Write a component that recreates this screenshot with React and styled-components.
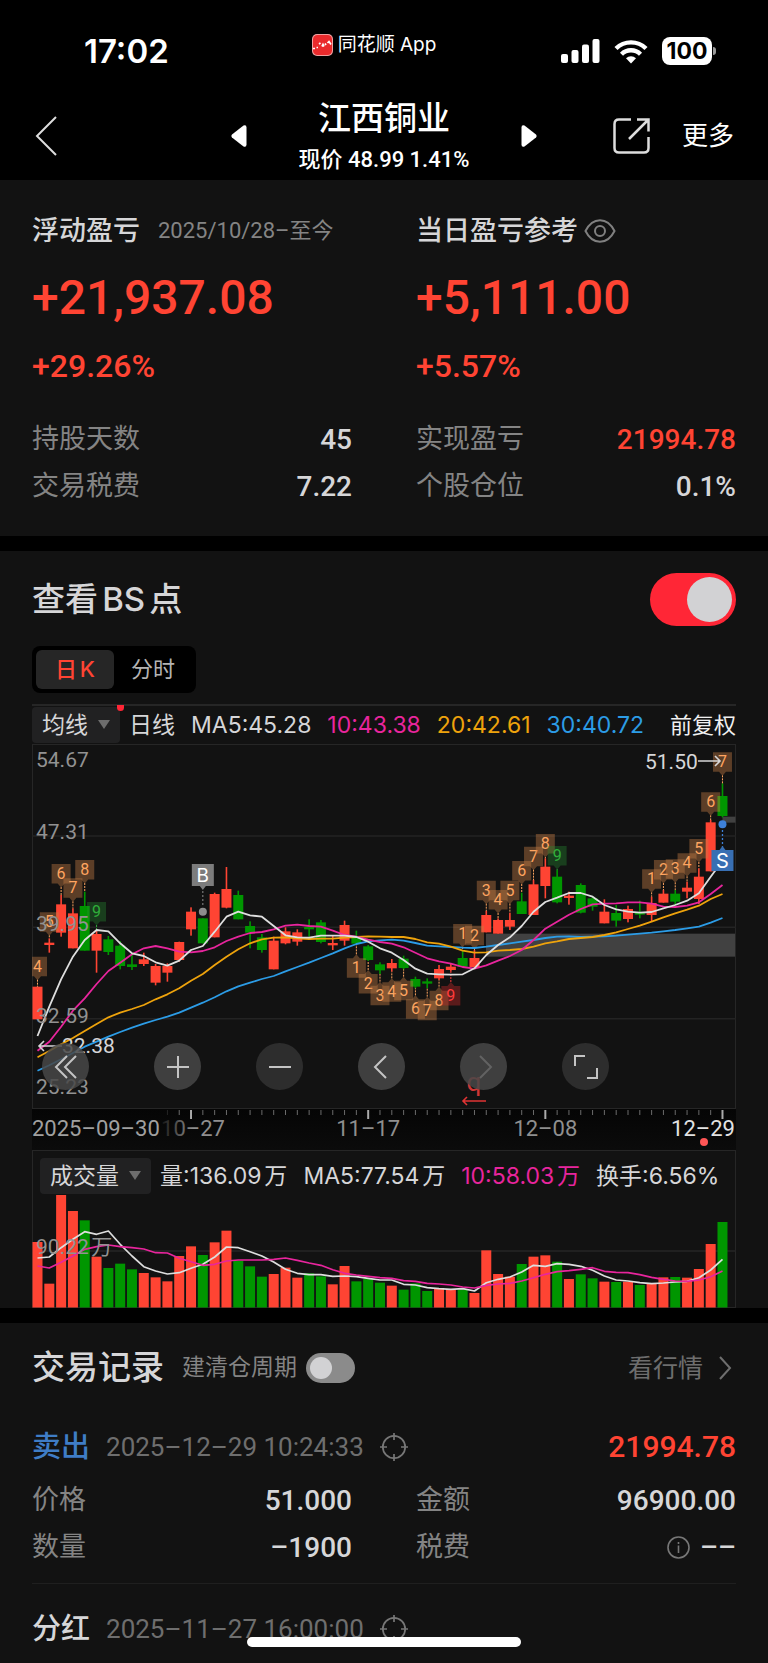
import React from "react";
import styled, { createGlobalStyle } from "styled-components";

const c = {
  panel: "#121212",
  line: "#262626",
  text: "#d6d6d8",
  muted: "#848484",
  dim: "#6e6e6e",
  red: "#ff4433",
  green: "#009600",
  pink: "#e8259d",
  orange: "#eea30c",
  blue: "#2c9ce6",
};

const cjk = '"Noto Sans CJK SC", sans-serif';
const uiFont = `Inter, ${cjk}`;
const numFont = `Roboto, ${cjk}`;

const GlobalStyle = createGlobalStyle`
  * { box-sizing: border-box; }
  body { margin: 0; background: #000; color: ${c.text}; font-family: ${uiFont}; line-height: 1.2; text-autospace: normal; }
  button, select, input { font: inherit; color: inherit; margin: 0; padding: 0; border: 0; background: none; }
  button { cursor: pointer; }
  svg { display: block; flex: none; }
  dl, dd, dt, h1, h2, h3, p { margin: 0; font-weight: inherit; }
`;

const Page = styled.main`
  position: relative;
  background: #000;
`;

/* ---------- status bar and navigation ---------- */

const StatusBar = styled.div`
  display: grid;
  grid-template-columns: 1fr auto 1fr;
  align-items: center;
  height: 96px;
  padding: 6px 52px 0 32px;
  color: #fff;
`;
const Clock = styled.span`
  padding-left: 52px;
  font-size: 33px;
  font-weight: 600;
  line-height: 40px;
`;
const AppBadge = styled.span`
  display: flex;
  align-items: center;
  gap: 5px;
  margin: 0 0 12px;
  font-size: 19px;
  line-height: 24px;
`;
const StatusIcons = styled.div`
  display: flex;
  align-items: center;
  justify-content: flex-end;
  gap: 14px;
`;
const Battery = styled.span`
  position: relative;
  width: 50px;
  height: 28px;
  border-radius: 8px;
  background: #fff;
  color: #000;
  font-size: 23px;
  font-weight: 700;
  line-height: 28px;
  text-align: center;
  margin-right: 4px;
  &::after {
    content: "";
    position: absolute;
    right: -4px;
    top: 10px;
    width: 3px;
    height: 8px;
    border-radius: 0 3px 3px 0;
    background: #999;
  }
`;

const NavBar = styled.header`
  display: grid;
  grid-template-columns: 1fr 306px 1fr;
  align-items: center;
  height: 84px;
  padding: 0 34px 4px;
  color: #fff;
`;
const Stepper = styled.div`
  display: flex;
  align-items: center;
  justify-content: space-between;
  text-align: center;
`;
const StockName = styled.h1`
  font-size: 33px;
  font-weight: 500;
  line-height: 44px;
`;
const StockQuote = styled.p`
  margin-top: 4px;
  font-size: 22px;
  font-weight: 500;
  font-family: ${numFont};
  line-height: 32px;
`;
const NavActions = styled.div`
  display: flex;
  align-items: center;
  justify-content: flex-end;
  gap: 32px;
  font-size: 26px;
  line-height: 36px;
`;
const IconButton = styled.button`
  display: flex;
  align-items: center;
`;

/* ---------- shared blocks ---------- */

const Section = styled.section`
  background: ${c.panel};
  padding: ${(p) => p.$pad};
  & + & { margin-top: 15px; }
`;
const TwoColumns = styled.div`
  display: grid;
  grid-template-columns: 1fr 1fr;
  column-gap: 64px;
`;
const HeadRow = styled.div`
  display: flex;
  align-items: center;
  height: 34px;
  gap: ${(p) => p.$gap};
`;
const Label = styled.h2`
  font-size: 27px;
  font-weight: 500;
  line-height: 34px;
`;
const Period = styled.span`
  font-family: ${numFont};
  font-size: 22px;
  color: ${c.muted};
`;
const Amount = styled.p`
  margin-top: 22px;
  font: 500 48px/56px ${numFont};
  color: ${c.red};
`;
const Percent = styled.p`
  margin-top: 20px;
  font: 500 32px/40px ${numFont};
  color: ${c.red};
`;
const Facts = styled.dl`
  display: grid;
  grid-template-columns: 1fr 1fr;
  column-gap: 64px;
  margin-top: ${(p) => p.$top};
`;
const Fact = styled.div`
  display: flex;
  align-items: center;
  justify-content: space-between;
  height: 47px;
`;
const FactName = styled.dt`
  font-size: 27px;
  color: ${c.muted};
`;
const FactValue = styled.dd`
  display: flex;
  align-items: center;
  gap: 10px;
  font: 500 28px/34px ${numFont};
  color: ${(p) => (p.$hot ? c.red : c.text)};
`;

const Toggle = styled.input.attrs({ type: "checkbox" })`
  appearance: none;
  position: relative;
  flex: none;
  width: ${(p) => (p.$small ? 49 : 86)}px;
  height: ${(p) => (p.$small ? 30 : 53)}px;
  border-radius: 27px;
  background: #8b8b8b;
  cursor: pointer;
  &::after {
    content: "";
    position: absolute;
    top: 4px;
    left: 4px;
    width: ${(p) => (p.$small ? 22 : 45)}px;
    height: ${(p) => (p.$small ? 22 : 45)}px;
    border-radius: 50%;
    background: #d2d2d4;
  }
  &:checked { background: #ff2636; }
  &:checked::after { left: auto; right: 4px; }
`;

/* ---------- chart section ---------- */

const ChartHead = styled.div`
  display: flex;
  align-items: center;
  justify-content: space-between;
  height: 53px;
`;
const ChartTitle = styled.label`
  font-size: 33px;
  font-weight: 500;
`;
const Tabs = styled.div`
  display: inline-flex;
  vertical-align: top;
  margin: 20px 0 11px;
  padding: 4px;
  height: 47px;
  border-radius: 8px;
  background: #000;
`;
const Tab = styled.button`
  width: 78px;
  border-radius: 6px;
  font-size: 22px;
  font-weight: ${(p) => (p.$active ? 500 : 400)};
  color: ${(p) => (p.$active ? c.red : "#b4b4b4")};
  background: ${(p) => (p.$active ? "#262626" : "transparent")};
`;
const Legend = styled.div`
  position: relative;
  display: flex;
  align-items: center;
  gap: 16px;
  white-space: nowrap;
  font-size: 23px;
  line-height: 32px;
`;
const MainLegend = styled(Legend)`
  height: 40px;
  border-top: 2px solid ${c.line};
`;
const VolumeLegend = styled(Legend)`
  padding: 8px 8px 1px;
`;
const LegendItem = styled.span`
  color: ${(p) => p.$color || c.text};
`;
const AdjustButton = styled.button`
  margin-left: auto;
  font-size: 22px;
  color: #f0f0f0;
`;
const Picker = styled.label`
  position: relative;
  display: flex;
  height: 36px;
  width: ${(p) => p.$width};
  margin-right: -7px;
  flex: none;
  border-radius: 4px;
  background: #212122;
  &::after {
    content: "";
    position: absolute;
    right: 10px;
    top: 13px;
    border: 6px solid transparent;
    border-top: 9px solid #6d6d6d;
    border-bottom: 0;
  }
`;
const PickerSelect = styled.select`
  appearance: none;
  width: 100%;
  padding: 0 10px;
`;
const NewDot = styled.i`
  position: absolute;
  left: 85px;
  top: -1px;
  width: 7px;
  height: 6px;
  border-radius: 0 0 4px 4px;
  background: #ff2636;
`;
const Frame = styled.div`
  position: relative;
  box-shadow: inset 0 0 0 1px ${c.line};
`;
const Plot = styled.svg`
  width: 100%;
  height: auto;
  font-family: ${numFont};
`;
const Tools = styled.div`
  position: absolute;
  left: 10px;
  bottom: 19px;
  display: flex;
  gap: 55px;
`;
const Tool = styled.button`
  display: grid;
  place-items: center;
  width: 47px;
  height: 47px;
  border-radius: 50%;
  background: ${(p) => (p.$bright ? "rgba(72,72,72,.85)" : "rgba(50,50,50,.85)")};
  color: ${(p) => (p.$off ? "#626262" : "#c4c4c4")};
  &:first-child { margin-right: 10px; }
`;
const AxisStrip = styled.div`
  background: linear-gradient(#050505, #0b0b0b);
`;

/* ---------- records ---------- */

const RecordsHead = styled.div`
  display: flex;
  align-items: center;
  height: 36px;
`;
const RecordsTitle = styled.h2`
  font-size: 33px;
  font-weight: 500;
`;
const CycleLabel = styled.label`
  display: flex;
  align-items: center;
  gap: 9px;
  margin-left: 18px;
  font-size: 23px;
  color: ${c.muted};
`;
const QuoteLink = styled.a`
  display: flex;
  align-items: center;
  gap: 15px;
  margin: 0 4px 0 auto;
  font-size: 25px;
  color: ${c.dim};
  text-decoration: none;
`;
const Record = styled.article`
  padding-top: ${(p) => p.$top};
  padding-bottom: 12px;
  & + & { border-top: 1px solid #1f1f1f; }
`;
const RecordHead = styled.div`
  display: flex;
  align-items: center;
  height: 40px;
`;
const Kind = styled.h3`
  font-size: 29px;
  font-weight: 500;
  color: ${(p) => p.$color};
`;
const Stamp = styled.time`
  margin: 0 16px;
  font: 400 26px/34px ${numFont};
  color: ${c.dim};
`;
const Profit = styled.span`
  margin-left: auto;
  font: 500 30px/36px ${numFont};
  color: ${c.red};
`;
const HomeBar = styled.div`
  position: absolute;
  left: 50%;
  bottom: 17px;
  width: 274px;
  height: 10px;
  margin-left: -137px;
  border-radius: 5px;
  background: #fff;
`;

/* ---------- chart data ---------- */

// Heights are in thirds of a pixel: [wick top, body top, body bottom, wick bottom, rising]
const CANDLES = [
  [770,770,868,868,1],[625,638,645,668,1],[495,523,608,620,1],[535,550,655,655,1],[485,528,662,662,0],
  [600,612,662,728,1],[618,628,666,675,0],[633,647,708,718,0],[668,703,711,720,0],[668,688,702,708,1],
  [702,708,758,766,1],[700,708,728,755,1],[635,636,690,695,1],[532,545,598,617,1],[565,565,640,640,0],
  [488,492,622,622,1],[411,477,533,535,1],[482,495,568,568,0],[574,588,608,655,0],[612,622,660,668,0],
  [620,632,718,718,1],[592,604,640,643,1],[598,607,635,647,1],[568,591,598,620,0],[570,577,636,640,0],
  [617,639,646,660,1],[572,585,632,647,1],[602,622,641,645,0],[645,649,690,693,0],[697,703,721,732,0],
  [687,699,715,725,1],[677,686,714,718,0],[740,747,770,775,0],[745,754,761,775,0],[705,717,745,750,1],
  [702,710,720,725,1],[660,684,710,713,0],[660,684,711,714,1],[543,555,607,607,1],[565,570,611,611,1],
  [548,570,590,600,1],[488,514,552,552,0],[450,463,555,555,1],[385,410,468,505,1],[420,440,517,520,0],
  [485,497,504,524,1],[460,465,548,550,0],[500,505,530,542,0],[508,545,580,580,1],[525,549,572,590,0],
  [527,537,567,577,1],[512,547,554,565,0],[500,519,555,575,1],[480,491,518,518,1],[480,491,515,525,0],
  [455,473,485,505,1],[415,440,507,522,1],[270,277,424,424,1],[160,198,258,262,0],
];
const MA = [
  [c.blue, [1022,1006,988,969,950,935,920,906,893,881,870,860,848,833,818,802,784,769,758,747,738,724,711,698,684,670,655,642,634,631,629,632,639,647,649,651,653,654,650,645,640,635,630,624,620,619,621,620,619,617,614,611,608,604,600,595,590,578,564]],
  [c.orange, [982,963,943,924,903,882,862,848,837,825,808,793,775,752,732,705,680,658,640,628,623,622,625,627,626,626,623,621,619,620,621,621,627,637,641,650,662,668,667,662,660,657,650,640,634,627,624,621,615,607,597,587,575,562,550,539,527,507,492]],
  [c.pink, [962,935,890,842,805,762,723,698,673,655,648,655,665,667,663,652,633,620,609,606,598,587,584,588,590,602,615,620,629,636,641,652,668,685,694,701,711,716,706,692,678,660,630,596,575,554,537,523,521,520,517,517,521,530,531,527,517,492,465]],
  ["#dedede", [918,830,748,680,630,600,604,640,670,678,697,707,692,660,648,605,560,545,556,560,588,616,622,623,617,617,617,621,635,655,668,690,716,731,733,734,733,715,675,645,622,588,545,516,503,489,489,500,525,538,545,548,546,535,525,512,490,440,392]],
];
const VOLUMES = [423,548,282,330,358,467,501,488,505,516,529,541,465,436,462,424,389,479,496,527,519,500,530,517,526,550,495,541,533,545,554,566,547,570,561,567,565,576,448,519,527,489,467,463,482,534,520,532,542,543,542,552,547,529,528,530,504,429,363];
const VOLUME_MA = [
  ["#dedede", [471,468,440,415,392,400,390,430,465,497,510,519,515,502,490,468,438,440,452,465,483,505,517,521,521,526,525,527,532,537,537,550,552,560,563,565,563,570,545,535,528,513,493,496,488,490,496,508,525,537,540,545,548,546,543,541,530,507,475]],
  [c.pink, [495,501,484,465,445,437,432,437,440,444,455,456,472,482,493,490,480,477,477,477,475,471,478,486,493,506,517,522,526,530,532,539,541,547,549,552,558,561,553,549,547,540,530,520,512,509,505,500,511,514,515,521,529,535,540,541,537,527,510]],
];
// Count tags: [candle, text, box top, placed below the candle]
const COUNTS = [
  [0,"4",680],[1,"5",547],[2,"6",402],[3,"7",445],[4,"8",390],[5,"9",516],
  [27,"1",685,1],[28,"2",732,1],[29,"3",767,1],[30,"4",757,1],[31,"5",752,1],[32,"6",808,1],[33,"7",812,1],[34,"8",782,1],[35,"9",768,1],
  [36,"1",582],[37,"2",587],[38,"3",452],[39,"4",480],[40,"5",452],[41,"6",393],[42,"7",350],[43,"8",312],[44,"9",348],
  [52,"1",418],[53,"2",390],[54,"3",388],[55,"4",370],[56,"5",327],[57,"6",187],[58,"7",67],
];

const xAt = (i) => 5.5 + i * 11.81;
const yAt = (v) => (v - 42) / 3;
const volY = (v) => (v - 282) / 3;
const points = (list, y) => list.map((v, i) => `${xAt(i).toFixed(1)},${y(v).toFixed(1)}`).join(" ");

function CountTag({ at, text, top, below }) {
  const x = xAt(at);
  const y = yAt(top);
  const nine = text === "9";
  const fill = !nine ? "rgba(196,124,70,.42)" : below ? "rgba(190,40,40,.42)" : "rgba(40,140,50,.36)";
  const ink = !nine ? "#ffa560" : below ? "#ff3b3b" : "#2fae3a";
  const [wickTop, , , wickBottom] = CANDLES[at];
  const from = below ? y - 4 : y + 23;
  const to = yAt(below ? wickBottom : wickTop);
  return (
    <g>
      <line x1={x} x2={x} y1={from} y2={to} stroke={ink} strokeWidth="1" strokeDasharray="2 1" />
      <path
        fill={fill}
        d={below
          ? `M${x - 9.5} ${y}h6l3.5-4 3.5 4h6v19.5h-19z`
          : `M${x - 9.5} ${y}h19v19.5h-6l-3.5 4-3.5-4h-6z`}
      />
      <text x={x} y={y + 15} textAnchor="middle" fontSize="16" fill={ink}>{text}</text>
    </g>
  );
}

function PriceChart() {
  const labels = [["54.67", 112], ["47.31", 327], ["39.95", 602], ["32.59", 878], ["25.23", 1091]];
  return (
    <Plot viewBox="0 0 704 365" role="img" aria-label="日K线图">
      {[318, 592, 866].map((v) => (
        <line key={v} x1="0" x2="704" y1={yAt(v)} y2={yAt(v)} stroke="#232323" strokeWidth="1.5" />
      ))}
      <rect x="454" y={yAt(611)} width="249" height="23" fill="#414141" />
      <rect x={xAt(58)} y={yAt(260)} width="13" height="6" fill="#414141" />
      {CANDLES.map(([h, t, b, l, up], i) => (
        <g key={i} fill={up ? c.red : c.green}>
          <rect x={xAt(i) - 0.8} y={yAt(h)} width="1.6" height={(l - h) / 3} />
          <rect x={xAt(i) - 5} y={yAt(t)} width="10" height={(b - t) / 3} />
        </g>
      ))}
      {COUNTS.map(([at, text, top, below]) => (
        <CountTag key={at} at={at} text={text} top={top} below={below} />
      ))}
      {MA.map(([color, list]) => (
        <polyline key={color} points={points(list, yAt)} fill="none" stroke={color} strokeWidth="1.8" strokeLinejoin="round" />
      ))}
      <g>
        <line x1={xAt(14)} x2={xAt(14)} y1="147" y2="162" stroke="#8d8d8d" strokeWidth="1" strokeDasharray="2 2" />
        <circle cx={xAt(14)} cy={yAt(545)} r="4" fill="#8d8d8d" />
        <path d={`M${xAt(14) - 11} 120h22v22h-8l-3 4-3-4h-8z`} fill="#7c7c7c" />
        <text x={xAt(14)} y="138" textAnchor="middle" fontSize="19" fill="#fff" fontFamily="Inter">B</text>
      </g>
      <g>
        <line x1={xAt(58)} x2={xAt(58)} y1="82" y2="103" stroke="#3d80d8" strokeWidth="1.3" strokeDasharray="2 2" />
        <circle cx={xAt(58)} cy={yAt(283)} r="4" fill="#3d80d8" />
        <path d={`M${xAt(58) - 11} 106h8l3-4 3 4h8v21h-22z`} fill="#386fb3" />
        <text x={xAt(58)} y="124" textAnchor="middle" fontSize="20" fill="#fff" fontFamily="Inter">S</text>
      </g>
      {labels.map(([t, v]) => (
        <text key={t} x="4" y={yAt(v)} fontSize="21" fill="#929292">{t}</text>
      ))}
      <g stroke={c.text} strokeWidth="1.6" fill="none">
        <path d="M7 302h23M12 297l-5 5 5 5" />
        <path d="M666 17h22M683 12l5 5-5 5" />
      </g>
      <text x="30" y={yAt(970)} fontSize="21" fill={c.text}>32.38</text>
      <text x="613" y={yAt(118)} fontSize="21" fill={c.text}>51.50</text>
      <text x="442" y="347" textAnchor="middle" fontSize="26" fill="#cf3636">q</text>
      <path d="M431 357h23M435 353l-4 4 4 4" stroke="#e03434" strokeWidth="1.6" fill="none" />
    </Plot>
  );
}

function DateAxis() {
  const major = [13, 28, 43, 58];
  return (
    <Plot viewBox="0 0 704 41" role="img" aria-label="日期">
      <defs>
        <linearGradient id="dateFade" x1="0" x2="1" y1="0" y2="0">
          <stop offset="0" stopColor="#8f8f8f" stopOpacity=".1" />
          <stop offset=".5" stopColor="#8f8f8f" />
        </linearGradient>
      </defs>
      {CANDLES.map((_, i) => {
        const big = major.includes(i);
        return i > 10 ? (
          <line key={i} x1={xAt(i)} x2={xAt(i)} y1="1" y2={big ? 10 : 6}
            stroke={big ? "#aaa" : "#6b6b6b"} strokeWidth={big ? 2 : 1} opacity={i < 12 ? 0.3 : 1} />
        ) : null;
      })}
      <g fontSize="22" fill="#8f8f8f">
        <text x="0" y="27" fill="#a0a0a0">2025–09–30</text>
        <text x={xAt(13) + 2} y="27" textAnchor="middle" fill="url(#dateFade)">10–27</text>
        <text x={xAt(28)} y="27" textAnchor="middle">11–17</text>
        <text x={xAt(43)} y="27" textAnchor="middle">12–08</text>
        <text x="703" y="27" textAnchor="end" fill="#e2e2e2">12–29</text>
      </g>
      <circle cx="672" cy="33" r="4" fill="#ff5555" />
    </Plot>
  );
}

function VolumeChart() {
  return (
    <Plot viewBox="0 0 704 113" role="img" aria-label="成交量图">
      <line x1="0" x2="704" y1="56" y2="56" stroke="#262626" strokeWidth="1.5" />
      {VOLUMES.map((v, i) => (
        <rect key={i} x={xAt(i) - 5} y={volY(v)} width="10" height={112.5 - volY(v)} fill={CANDLES[i][4] ? c.red : c.green} />
      ))}
      {VOLUME_MA.map(([color, list]) => (
        <polyline key={color} points={points(list, volY)} fill="none" stroke={color} strokeWidth="1.7" strokeLinejoin="round" />
      ))}
      <text x="4" y="59" fontSize="21" fill="#929292">90.22万</text>
    </Plot>
  );
}

/* ---------- icons ---------- */

const Stroke = ({ w, h, d, width = 2, color = "currentColor" }) => (
  <svg width={w} height={h} viewBox={`0 0 ${w} ${h}`} fill="none" stroke={color} strokeWidth={width}>
    <path d={d} />
  </svg>
);
const Target = () => (
  <svg width="28" height="28" viewBox="0 0 28 28" fill="none" stroke="#777" strokeWidth="1.7">
    <circle cx="14" cy="14" r="11.2" />
    <path d="M14 0v7M14 21v7M0 14h7M21 14h7" />
  </svg>
);
const Info = () => (
  <svg width="23" height="23" viewBox="0 0 23 23" fill="none" stroke="#777" strokeWidth="1.6">
    <circle cx="11.5" cy="11.5" r="10.5" />
    <path d="M11.5 9.5v7.5M11.5 6v2" />
  </svg>
);

export default function App() {
  return (
    <Page>
      <GlobalStyle />
      <StatusBar>
        <Clock>17:02</Clock>
        <AppBadge>
          <svg width="21" height="22" viewBox="0 0 21 22">
            <rect width="21" height="22" rx="5" fill="#f0a0a0" />
            <rect x="1" y="1" width="19" height="20" rx="4.5" fill="#e92a2c" />
            <path d="M1 14.5h2M4.500 13.500h1.500M7 10l1.500-1M10 12.500l1-2 1 2M13 9.500l1 1.500M15.500 9l1.500-1.500 2 3" stroke="#fff" strokeWidth="1.700" fill="none" />
          </svg>
          同花顺 App
        </AppBadge>
        <StatusIcons>
          <svg width="39" height="24" viewBox="0 0 39 24" fill="#fff">
            <rect x="0" y="15" width="7" height="9" rx="2" />
            <rect x="10.500" y="11" width="7" height="13" rx="2" />
            <rect x="21" y="5.500" width="7" height="18.500" rx="2" />
            <rect x="31.500" y="0" width="7" height="24" rx="2" />
          </svg>
          <svg width="34" height="25" viewBox="0 0 34 25" fill="none" stroke="#fff" strokeWidth="4.400">
            <path d="M2 9.500a21.500 21.500 0 0 1 30 0" />
            <path d="M7.500 15.200a13.500 13.500 0 0 1 19 0" />
            <path d="M17 24.500l-5-5.200a7.200 7.200 0 0 1 10 0z" fill="#fff" stroke="none" />
          </svg>
          <Battery>100</Battery>
        </StatusIcons>
      </StatusBar>

      <NavBar>
        <IconButton aria-label="返回">
          <Stroke w={24} h={40} d="M22 1L3 20l19 19" color="#ddd" />
        </IconButton>
        <Stepper>
          <IconButton aria-label="上一只">
            <svg width="16" height="22" viewBox="0 0 16 22" fill="#fff"><path d="M1 9.500L12.500.6Q15.500-.5 15.500 2.500v17q0 3-3 1.900L1 12.500q-1.200-1.500 0-3z" /></svg>
          </IconButton>
          <div>
            <StockName>江西铜业</StockName>
            <StockQuote>现价 48.99 1.41%</StockQuote>
          </div>
          <IconButton aria-label="下一只">
            <svg width="16" height="22" viewBox="0 0 16 22" fill="#fff"><path d="M15 9.500L3.500.6Q.5-.5.5 2.500v17q0 3 3 1.900L15 12.500q1.200-1.500 0-3z" /></svg>
          </IconButton>
        </Stepper>
        <NavActions>
          <IconButton aria-label="分享">
            <Stroke w={37} h={36} width={2.5} color="#ddd" d="M18 1.500H6Q1.500 1.500 1.500 6v24q0 4.500 4.500 4.500h25q4.500 0 4.500-4.500V19M24 1.500h11.500v12M35 2L16 21" />
          </IconButton>
          <button>更多</button>
        </NavActions>
      </NavBar>

      <Section $pad="34px 32px 26px">
        <TwoColumns>
          <div>
            <HeadRow $gap="18px">
              <Label>浮动盈亏</Label>
              <Period>2025/10/28–至今</Period>
            </HeadRow>
            <Amount>+21,937.08</Amount>
            <Percent>+29.26%</Percent>
          </div>
          <div>
            <HeadRow $gap="6px">
              <Label>当日盈亏参考</Label>
              <IconButton aria-label="隐藏金额">
                <svg width="32" height="24" viewBox="0 0 32 24" fill="none" stroke="#808080" strokeWidth="2">
                  <path d="M1.500 12C5 5 10 1.200 16 1.200S27 5 30.500 12C27 19 22 22.800 16 22.800S5 19 1.500 12z" />
                  <circle cx="16" cy="12" r="5" />
                </svg>
              </IconButton>
            </HeadRow>
            <Amount>+5,111.00</Amount>
            <Percent>+5.57%</Percent>
          </div>
        </TwoColumns>
        <Facts $top="30px">
          <Fact><FactName>持股天数</FactName><FactValue>45</FactValue></Fact>
          <Fact><FactName>实现盈亏</FactName><FactValue $hot>21994.78</FactValue></Fact>
          <Fact><FactName>交易税费</FactName><FactValue>7.22</FactValue></Fact>
          <Fact><FactName>个股仓位</FactName><FactValue>0.1%</FactValue></Fact>
        </Facts>
      </Section>

      <Section $pad="22px 32px 0">
        <ChartHead>
          <ChartTitle htmlFor="bs">查看BS点</ChartTitle>
          <Toggle id="bs" defaultChecked />
        </ChartHead>
        <Tabs role="tablist">
          <Tab role="tab" aria-selected="true" $active>日K</Tab>
          <Tab role="tab" aria-selected="false">分时</Tab>
        </Tabs>
        <MainLegend>
          <Picker $width="88px">
            <PickerSelect aria-label="主图指标"><option>均线</option></PickerSelect>
          </Picker>
          <NewDot />
          <LegendItem>日线</LegendItem>
          <LegendItem>MA5:45.28</LegendItem>
          <LegendItem $color={c.pink}>10:43.38</LegendItem>
          <LegendItem $color={c.orange}>20:42.61</LegendItem>
          <LegendItem $color={c.blue}>30:40.72</LegendItem>
          <AdjustButton>前复权</AdjustButton>
        </MainLegend>
        <Frame>
          <PriceChart />
          <Tools>
            <Tool $bright aria-label="最早"><Stroke w={24} h={24} d="M13 1L2 12l11 11M22 1L11 12l11 11" /></Tool>
            <Tool $bright aria-label="放大"><Stroke w={24} h={24} d="M12 1v22M1 12h22" /></Tool>
            <Tool aria-label="缩小"><Stroke w={24} h={24} d="M1 12h22" /></Tool>
            <Tool $bright aria-label="向左"><Stroke w={24} h={24} d="M16 1L5 12l11 11" /></Tool>
            <Tool $bright $off aria-label="向右"><Stroke w={24} h={24} d="M8 1l11 11L8 23" /></Tool>
            <Tool aria-label="全屏"><Stroke w={26} h={26} d="M2 12V2h10M24 14v10H14" /></Tool>
          </Tools>
        </Frame>
        <AxisStrip><DateAxis /></AxisStrip>
        <Frame>
          <VolumeLegend>
            <Picker $width="111px">
              <PickerSelect aria-label="副图指标"><option>成交量</option></PickerSelect>
            </Picker>
            <LegendItem>量:136.09万</LegendItem>
            <LegendItem>MA5:77.54万</LegendItem>
            <LegendItem $color={c.pink}>10:58.03万</LegendItem>
            <LegendItem>换手:6.56%</LegendItem>
          </VolumeLegend>
          <VolumeChart />
        </Frame>
      </Section>

      <Section $pad="27px 32px 3px">
        <RecordsHead>
          <RecordsTitle>交易记录</RecordsTitle>
          <CycleLabel>建清仓周期<Toggle $small /></CycleLabel>
          <QuoteLink href="#quote">看行情<Stroke w={14} h={24} d="M2 1l10 11L2 23" /></QuoteLink>
        </RecordsHead>
        <Record $top="41px">
          <RecordHead>
            <Kind $color="#3f7dc6">卖出</Kind>
            <Stamp>2025–12–29 10:24:33</Stamp>
            <IconButton aria-label="定位"><Target /></IconButton>
            <Profit>21994.78</Profit>
          </RecordHead>
          <Facts $top="10px">
            <Fact><FactName>价格</FactName><FactValue>51.000</FactValue></Fact>
            <Fact><FactName>金额</FactName><FactValue>96900.00</FactValue></Fact>
            <Fact><FactName>数量</FactName><FactValue>–1900</FactValue></Fact>
            <Fact><FactName>税费</FactName><FactValue><Info />––</FactValue></Fact>
          </Facts>
        </Record>
        <Record $top="25px">
          <RecordHead>
            <Kind $color={c.text}>分红</Kind>
            <Stamp>2025–11–27 16:00:00</Stamp>
            <IconButton aria-label="定位"><Target /></IconButton>
          </RecordHead>
        </Record>
      </Section>
      <HomeBar />
    </Page>
  );
}
